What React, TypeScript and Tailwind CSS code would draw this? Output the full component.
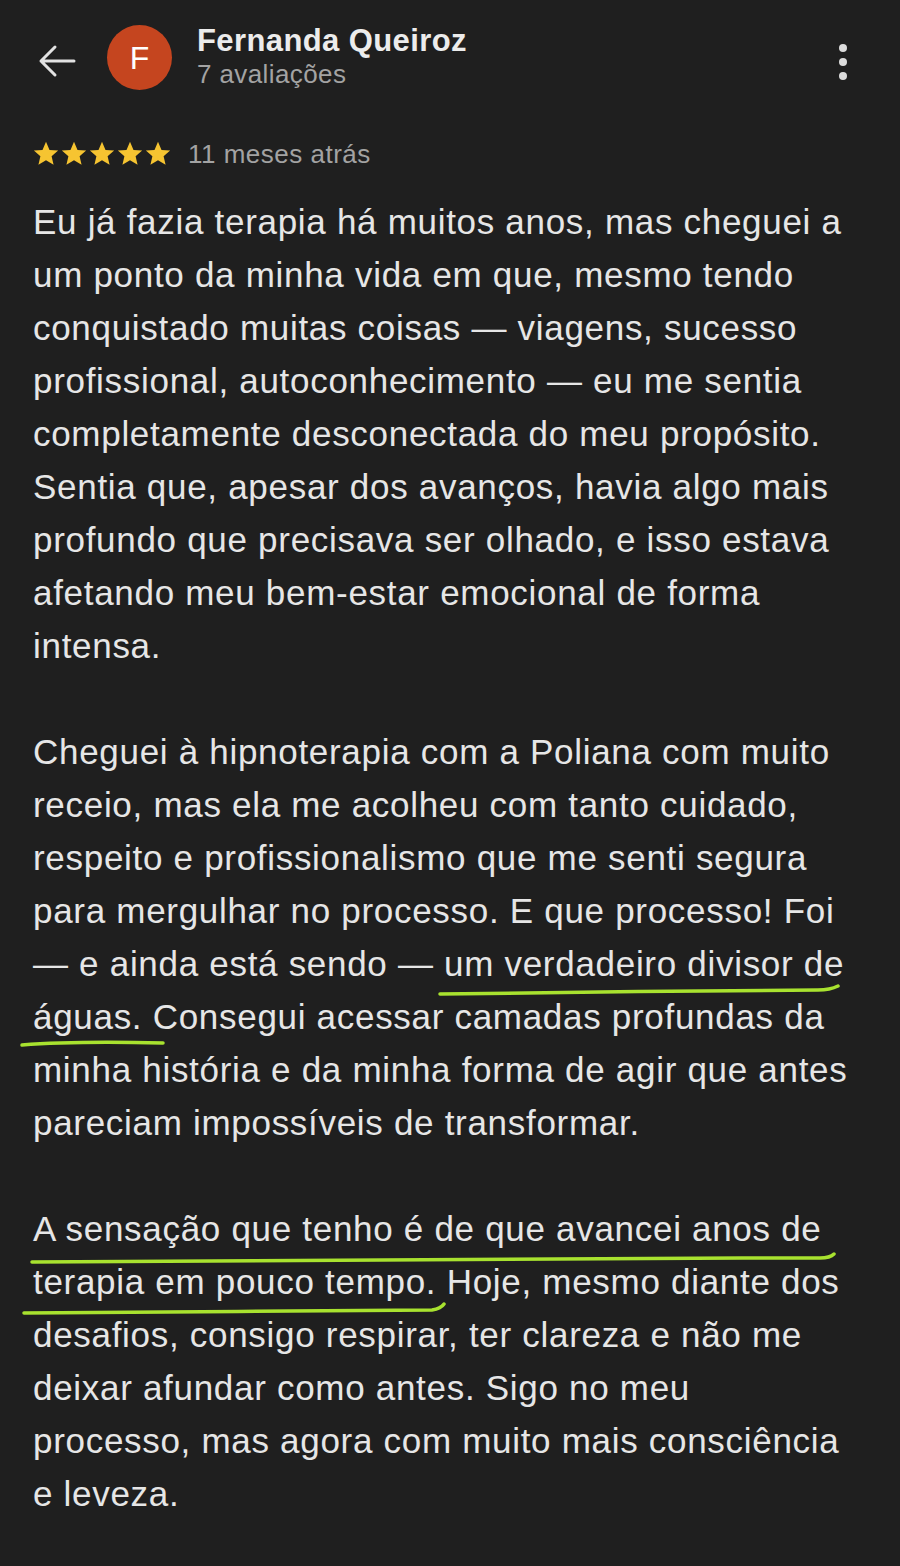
import React from 'react';

type Mark = { left: number; width: number; top: number; d: string };

const para1 = [
  'Eu já fazia terapia há muitos anos, mas cheguei a',
  'um ponto da minha vida em que, mesmo tendo',
  'conquistado muitas coisas — viagens, sucesso',
  'profissional, autoconhecimento — eu me sentia',
  'completamente desconectada do meu propósito.',
  'Sentia que, apesar dos avanços, havia algo mais',
  'profundo que precisava ser olhado, e isso estava',
  'afetando meu bem-estar emocional de forma',
  'intensa.',
];

const para2 = [
  'Cheguei à hipnoterapia com a Poliana com muito',
  'receio, mas ela me acolheu com tanto cuidado,',
  'respeito e profissionalismo que me senti segura',
  'para mergulhar no processo. E que processo! Foi',
  '— e ainda está sendo — um verdadeiro divisor de',
  'águas. Consegui acessar camadas profundas da',
  'minha história e da minha forma de agir que antes',
  'pareciam impossíveis de transformar.',
];

const para3 = [
  'A sensação que tenho é de que avancei anos de',
  'terapia em pouco tempo. Hoje, mesmo diante dos',
  'desafios, consigo respirar, ter clareza e não me',
  'deixar afundar como antes. Sigo no meu',
  'processo, mas agora com muito mais consciência',
  'e leveza.',
];

// hand drawn green underlines, keyed by paragraph/line
const marks: Record<string, Mark> = {
  '2-4': { left: 438, width: 402, top: 47, d: 'M2 10 C 120 8, 260 7, 380 6 C 390 6, 396 4, 400 2' },
  '2-5': { left: 20, width: 145, top: 48, d: 'M2 7 C 40 4, 100 4, 143 5' },
  '3-0': { left: 30, width: 806, top: 50, d: 'M2 10 C 200 7, 500 6, 790 6 C 798 6, 802 4, 804 2' },
  '3-1': { left: 22, width: 424, top: 47, d: 'M2 11 C 100 10, 300 9, 410 8 C 416 7, 420 5, 422 2' },
};

function Line({ text, id }: { text: string; id: string }) {
  const m = marks[id];
  return (
    <div className="relative h-[53px] leading-[53px] whitespace-nowrap">
      {text}
      {m && (
        <svg
          className="absolute pointer-events-none"
          style={{ left: m.left - 33, top: m.top, width: m.width, height: 13 }}
          viewBox={`0 0 ${m.width} 13`}
          fill="none"
        >
          <path d={m.d} stroke="#a8e22f" strokeWidth="3.5" strokeLinecap="round" />
        </svg>
      )}
    </div>
  );
}

function Star() {
  return (
    <svg width="28" height="28" viewBox="0 0 24 24">
      <path
        d="M12 1.6l3 6.9 7.4.6-5.6 4.9 1.7 7.3-6.5-3.9-6.5 3.9 1.7-7.3-5.6-4.9 7.4-.6z"
        fill="#f6c431"
      />
    </svg>
  );
}

export default function App() {
  return (
    <div className="min-h-[1566px] w-[900px] bg-[#1f1f1f] text-[#e6e6e6] font-['Liberation_Sans',Arial,sans-serif]">
      {/* Header */}
      <header className="flex items-start pt-[25px] pl-[38px] pr-[53px]">
        <svg width="38" height="34" viewBox="0 0 38 34" className="mt-[19px]" fill="none">
          <path d="M3 17 H36 M17 3 L3 17 L17 31" stroke="#e2e2e2" strokeWidth="3" strokeLinecap="round" strokeLinejoin="round" />
        </svg>
        <div className="ml-[31px] w-[65px] h-[65px] rounded-full bg-[#c5451f] flex items-center justify-center text-[32px] text-white">
          F
        </div>
        <div className="ml-[25px] flex-1">
          <div className="text-[31px] font-bold leading-[32px] tracking-[0.4px] text-[#ececec]">Fernanda Queiroz</div>
          <div className="text-[26px] leading-[34px] tracking-[0.4px] text-[#a3a3a3]">7 avaliações</div>
        </div>
        <div className="flex flex-col gap-[6px] mt-[19px]">
          <span className="w-[8px] h-[8px] rounded-full bg-[#dcdcdc]" />
          <span className="w-[8px] h-[8px] rounded-full bg-[#dcdcdc]" />
          <span className="w-[8px] h-[8px] rounded-full bg-[#dcdcdc]" />
        </div>
      </header>

      {/* Rating row */}
      <div className="flex items-center pl-[32px] mt-[48px] h-[30px]">
        <div className="flex">
          <Star />
          <Star />
          <Star />
          <Star />
          <Star />
        </div>
        <span className="ml-[16px] text-[26px] tracking-[0.5px] text-[#a3a3a3]">11 meses atrás</span>
      </div>

      {/* Review text */}
      <div className="pl-[33px] pt-[26px] text-[35px] tracking-[0.7px] pb-[40px]">
        {para1.map((t, i) => (
          <Line key={'1-' + i} id={'1-' + i} text={t} />
        ))}
        <div className="h-[53px]" />
        {para2.map((t, i) => (
          <Line key={'2-' + i} id={'2-' + i} text={t} />
        ))}
        <div className="h-[53px]" />
        {para3.map((t, i) => (
          <Line key={'3-' + i} id={'3-' + i} text={t} />
        ))}
      </div>
    </div>
  );
}
